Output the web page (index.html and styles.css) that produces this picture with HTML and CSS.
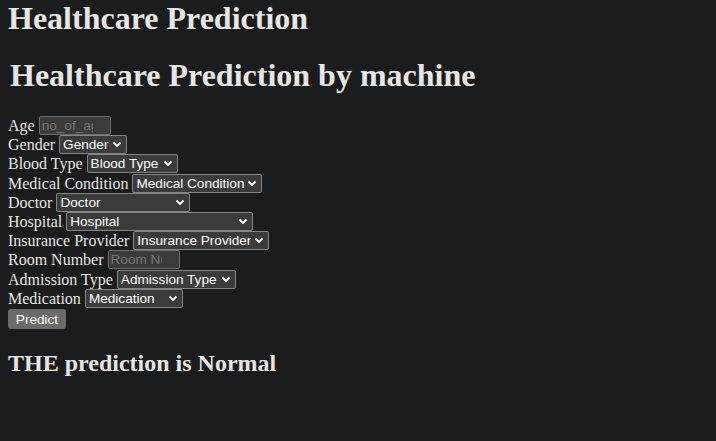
FILE: index.html
```html
<!DOCTYPE html>
<html>
<head>
<meta charset="utf-8">
<link rel="stylesheet" href="styles.css">
</head>
<body>
<h1 class="title">Healthcare Prediction</h1>
<h1 class="subtitle">Healthcare Prediction by machine</h1>
<form class="form">
  <div class="row"><label>Age</label> <input class="field w-age" type="text" placeholder="no_of_age"></div>
  <div class="row"><label>Gender</label> <select class="pick w-gender"><option>Gender</option></select></div>
  <div class="row"><label>Blood Type</label> <select class="pick w-blood"><option>Blood Type</option></select></div>
  <div class="row"><label>Medical Condition</label> <select class="pick w-med"><option>Medical Condition</option></select></div>
  <div class="row"><label>Doctor</label> <select class="pick w-doctor"><option>Doctor</option></select></div>
  <div class="row"><label>Hospital</label> <select class="pick w-hosp"><option>Hospital</option></select></div>
  <div class="row"><label>Insurance Provider</label> <select class="pick w-ins"><option>Insurance Provider</option></select></div>
  <div class="row"><label>Room Number</label> <input class="field w-room" type="text" placeholder="Room Number"></div>
  <div class="row"><label>Admission Type</label> <select class="pick w-adm"><option>Admission Type</option></select></div>
  <div class="row"><label>Medication</label> <select class="pick w-medic"><option>Medication</option></select></div>
  <div class="row btn-row"><button class="btn" type="button">Predict</button></div>
</form>
<h2 class="result">THE prediction is Normal</h2>
</body>
</html>
```
FILE: styles.css
```css
html { background: #1b1c1e; }
body {
  margin: 0 8px;
  color: #e8e6e3;
  font-family: "Liberation Serif", serif;
  font-size: 16px;
}
.title {
  font-size: 32px;
  font-weight: bold;
  margin: 0;
  line-height: 37px;
}
.subtitle {
  font-size: 32px;
  font-weight: bold;
  margin: 20px 0 21px 2px;
  line-height: 37px;
}
.form { margin: 0; padding-top: 1px; }
.row {
  height: 19.2px;
  display: flex;
  align-items: center;
  gap: 4px;
  white-space: nowrap;
}
.row label { line-height: 19px; }
.field, .pick, .btn {
  font-family: "Liberation Sans", Arial, sans-serif;
  font-size: 13.6px;
  box-sizing: border-box;
  height: 19px;
  margin: 0;
}
.field {
  background: #3b3b3b;
  border: 1px solid #6d6d6d;
  border-radius: 2px;
  color: #fff;
  padding: 0 17px 0 2px;
}
.field::placeholder { color: #777; }
.pick {
  appearance: none;
  -webkit-appearance: none;
  background-color: #3b3b3b;
  background-image: url("data:image/svg+xml;utf8,<svg xmlns='http://www.w3.org/2000/svg' width='10' height='7' viewBox='0 0 10 7'><path d='M1.5 1.5 L5 5 L8.5 1.5' fill='none' stroke='white' stroke-width='1.8'/></svg>");
  background-repeat: no-repeat;
  background-position: right 4px center;
  border: 1px solid #858585;
  border-radius: 2px;
  color: #fff;
  padding: 0 12px 0 3px;
  line-height: 17px;
}
.w-age { width: 72px; }
.w-gender { width: 68px; }
.w-blood { width: 91px; }
.w-med { width: 130px; }
.w-doctor { width: 134px; }
.w-hosp { width: 187px; }
.w-ins { width: 136px; }
.w-room { width: 72px; }
.w-adm { width: 119px; }
.w-medic { width: 98px; }
.btn-row { height: 21px; margin-top: 1px; }
.btn {
  background: #6b6b6b;
  color: #fff;
  border: none;
  border-radius: 3px;
  height: 20px;
  width: 58px;
  padding: 0;
}
.result {
  font-size: 24px;
  font-weight: bold;
  margin: 20px 0;
}
```
